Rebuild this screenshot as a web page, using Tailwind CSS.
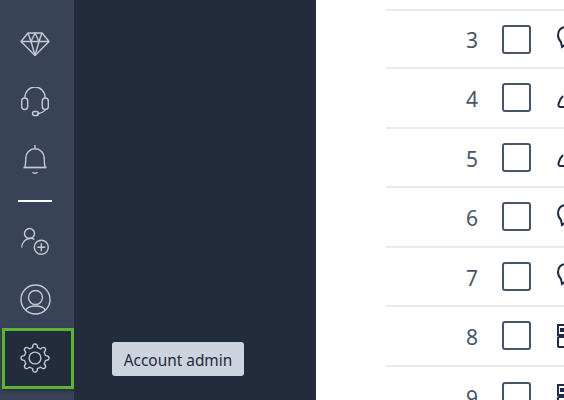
<!DOCTYPE html>
<html lang="en">
<head>
  <meta charset="UTF-8">
  <title>Account admin</title>
  <script src="https://cdn.jsdelivr.net/npm/@tailwindcss/browser@4"></script>
</head>
<body class="overflow-hidden">
  <div class="flex h-[400px] w-[564px] overflow-hidden font-['Noto_Sans',sans-serif]">

    <!-- Icon rail -->
    <nav class="flex h-full w-[74px] shrink-0 flex-col items-center bg-[#384357] pr-[4px] text-[#c4cad4]">
      <svg class="mt-[32px] shrink-0" width="30" height="24" viewBox="0 0 30 24" fill="none" stroke="currentColor" stroke-width="1.4" stroke-linejoin="round">
        <path d="M8 1h14l7 8.500-14 14-14-14z"/>
        <path d="M1 9.500h28M8 1l3 8.500L15 23.500l4-14L22 1M11 9.500 15 1l4 8.500"/>
      </svg>
      <svg class="mt-[31px] shrink-0" width="28" height="30" viewBox="0 0 28 30" fill="none" stroke="currentColor" stroke-width="1.4">
        <path d="M4 11v-1a10 10 0 0 1 20 0v1"/>
        <rect x=".7" y="11" width="6" height="11.500" rx="3"/>
        <rect x="21.300" y="11" width="6" height="11.500" rx="3"/>
        <path d="M24 22.500c0 2.500-4 3.500-8 4.500"/>
        <rect x="11.500" y="24.500" width="6" height="4" rx="2"/>
      </svg>
      <svg class="mt-[28px] shrink-0" width="24" height="30" viewBox="0 0 24 30" fill="none" stroke="currentColor" stroke-width="1.4">
        <path d="M12 0v3.500"/>
        <path d="M2 22c.6-3 .8-6 .8-9a9.200 9.200 0 0 1 18.400 0c0 3 .2 6 .8 9"/>
        <path d="M.5 22.500h23" stroke-width="1.700"/>
        <path d="M9.500 27c.7 1.700 4.300 1.700 5 0"/>
      </svg>
      <div class="mt-[25px] h-[2px] w-[34px] shrink-0 bg-white"></div>
      <svg class="mt-[25px] shrink-0" width="28" height="28" viewBox="0 0 28 28" fill="none" stroke="currentColor" stroke-width="1.4">
        <circle cx="8.500" cy="6.500" r="5"/>
        <path d="M.8 20.500c0-4.500 3-8 7-9 2-.5 4-.2 5.500 1"/>
        <circle cx="20.300" cy="20.300" r="7"/>
        <path d="M20.300 16.300v8M16.300 20.300h8"/>
      </svg>
      <svg class="mt-[29px] shrink-0" width="31" height="31" viewBox="0 0 31 31" fill="none" stroke="currentColor" stroke-width="1.4">
        <circle cx="15.500" cy="15.500" r="14.500"/>
        <circle cx="15.500" cy="13.500" r="7"/>
        <path d="M5.500 26.500c1.500-3 5-4.500 10-4.500s8.500 1.500 10 4.500"/>
      </svg>
      <!-- Selected item -->
      <div class="mt-[13px] ml-[2px] flex h-[61px] w-[72px] shrink-0 items-center justify-center self-start border-[3px] border-[#5cb531] bg-[#222c3d] pr-[6px] pb-[2px] shadow-[0_2px_4px_rgba(0,0,0,0.3)]">
        <svg width="30" height="30" viewBox="0 0 32 32" fill="none" stroke="currentColor" stroke-width="1.4" stroke-linejoin="round">
          <defs>
            <path id="tooth" d="M11.600 5.380 13.410 4.800Q13.300 1.150 16 1q2.700.15 2.590 3.800l1.810.58"/>
          </defs>
          <use href="#tooth"/>
          <use href="#tooth" transform="rotate(45 16 16)"/>
          <use href="#tooth" transform="rotate(90 16 16)"/>
          <use href="#tooth" transform="rotate(135 16 16)"/>
          <use href="#tooth" transform="rotate(180 16 16)"/>
          <use href="#tooth" transform="rotate(225 16 16)"/>
          <use href="#tooth" transform="rotate(270 16 16)"/>
          <use href="#tooth" transform="rotate(315 16 16)"/>
          <circle cx="16" cy="16" r="6.300"/>
        </svg>
      </div>
    </nav>

    <!-- Dark flyout with tooltip -->
    <div class="relative h-full w-[242px] shrink-0 bg-[#222c3d]">
      <div class="absolute left-[38px] top-[342px] flex h-[34px] w-[132px] items-center justify-center rounded-[3px] bg-[#cdd4e0] pt-[3px] text-[15.400px] text-[#1f2937]">Account admin</div>
    </div>

    <!-- Table -->
    <main class="h-full flex-1 overflow-hidden bg-white pt-[9px] text-[21px] text-[#4a5568]">
      <div class="ml-[70px] border-t-2 border-[#e5e9f1]"></div>
      <div class="ml-[70px] flex h-[58px] items-center border-b-2 border-[#e5e9f1]">
        <span class="w-[92px] shrink-0 pt-[4px] text-right">3</span>
        <span class="ml-[24px] h-[29px] w-[29px] shrink-0 rounded-[3px] border-2 border-[#475569]"></span>
        <svg class="mt-[-2px] ml-[26px] shrink-0" width="20" height="24" viewBox="0 0 20 24" fill="none" stroke="#1f2a44" stroke-width="2"><path d="M9 1C4 1 1 4.500 1 9c0 3 1.500 5.500 3 7l1 5 4-3"/></svg>
      </div>
      <div class="ml-[70px] flex h-[59.500px] items-center border-b-2 border-[#e5e9f1]">
        <span class="w-[92px] shrink-0 pt-[4px] text-right">4</span>
        <span class="ml-[24px] h-[29px] w-[29px] shrink-0 rounded-[3px] border-2 border-[#475569]"></span>
        <svg class="mt-[8px] ml-[26px] shrink-0" width="20" height="14" viewBox="0 0 20 14" fill="none" stroke="#1f2a44" stroke-width="2"><path d="M6 1C4 3 2 6 1.500 9c-.3 2 .5 3 2 3H9"/></svg>
      </div>
      <div class="ml-[70px] flex h-[59.500px] items-center border-b-2 border-[#e5e9f1]">
        <span class="w-[92px] shrink-0 pt-[4px] text-right">5</span>
        <span class="ml-[24px] h-[29px] w-[29px] shrink-0 rounded-[3px] border-2 border-[#475569]"></span>
        <svg class="mt-[8px] ml-[26px] shrink-0" width="20" height="14" viewBox="0 0 20 14" fill="none" stroke="#1f2a44" stroke-width="2"><path d="M6 1C4 3 2 6 1.500 9c-.3 2 .5 3 2 3H9"/></svg>
      </div>
      <div class="ml-[70px] flex h-[59.500px] items-center border-b-2 border-[#e5e9f1]">
        <span class="w-[92px] shrink-0 pt-[4px] text-right">6</span>
        <span class="ml-[24px] h-[29px] w-[29px] shrink-0 rounded-[3px] border-2 border-[#475569]"></span>
        <svg class="mt-[-2px] ml-[26px] shrink-0" width="20" height="24" viewBox="0 0 20 24" fill="none" stroke="#1f2a44" stroke-width="2"><path d="M9 1C4 1 1 4.500 1 9c0 3 1.500 5.500 3 7l1 5 4-3"/></svg>
      </div>
      <div class="ml-[70px] flex h-[59.500px] items-center border-b-2 border-[#e5e9f1]">
        <span class="w-[92px] shrink-0 pt-[4px] text-right">7</span>
        <span class="ml-[24px] h-[29px] w-[29px] shrink-0 rounded-[3px] border-2 border-[#475569]"></span>
        <svg class="mt-[-2px] ml-[26px] shrink-0" width="20" height="24" viewBox="0 0 20 24" fill="none" stroke="#1f2a44" stroke-width="2"><path d="M9 1C4 1 1 4.500 1 9c0 3 1.500 5.500 3 7l1 5 4-3"/></svg>
      </div>
      <div class="ml-[70px] flex h-[59.500px] items-center border-b-2 border-[#e5e9f1]">
        <span class="w-[92px] shrink-0 pt-[4px] text-right">8</span>
        <span class="ml-[24px] h-[29px] w-[29px] shrink-0 rounded-[3px] border-2 border-[#475569]"></span>
        <svg class="ml-[26px] shrink-0" width="20" height="24" viewBox="0 0 20 24" fill="none" stroke="#1f2a44" stroke-width="2"><rect x="1" y="1" width="12" height="10"/><rect x="3" y="4" width="6" height="4" fill="#1f2a44" stroke="none"/><rect x="1" y="13" width="12" height="10" rx="1"/></svg>
      </div>
      <div class="ml-[70px] flex h-[59.500px] items-center">
        <span class="w-[92px] shrink-0 pt-[4px] text-right">9</span>
        <span class="ml-[24px] h-[29px] w-[29px] shrink-0 rounded-[3px] border-2 border-[#475569]"></span>
        <svg class="ml-[26px] shrink-0" width="20" height="24" viewBox="0 0 20 24" fill="none" stroke="#1f2a44" stroke-width="2"><rect x="1" y="1" width="12" height="10"/><rect x="3" y="4" width="6" height="4" fill="#1f2a44" stroke="none"/><rect x="1" y="13" width="12" height="10" rx="1"/></svg>
      </div>
    </main>
  </div>
</body>
</html>
